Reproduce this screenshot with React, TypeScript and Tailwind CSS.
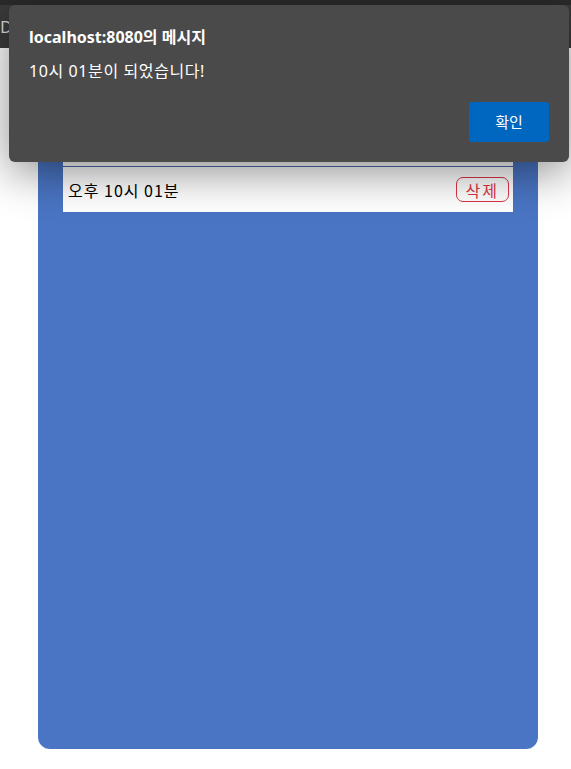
import React from "react";

export default function App() {
  return (
    <div className="relative w-[571px] h-[769px] overflow-hidden bg-white" style={{ fontFamily: '"Noto Sans", "Noto Sans CJK KR", sans-serif' }}>
      {/* browser bar */}
      <div className="h-[48px] bg-[#3b3b3b] border-t-[5px] border-[#2b2b2b] flex items-center">
        <span className="text-[#dcdcdc] text-[17px] ml-0 leading-none">D</span>
      </div>
      {/* page */}
      <div className="pl-[38px]">
        <div className="w-[500px] h-[701px] bg-[#4a75c4] rounded-b-[12px] pt-[71px] px-[25px]">
          <div className="h-[48px] bg-white border-b border-[#4a6aa8]" />
          <div className="h-[45px] bg-white flex items-center justify-between pl-[5px] pr-[4px]">
            <span className="text-[16px] text-black tracking-[1px]" style={{ fontFamily: '"Noto Sans CJK KR", sans-serif' }}>오후 10시 01분</span>
            <button className="h-[25px] px-[9px] border border-[#dc3545] rounded-[7px] text-[#dc3545] text-[16px] leading-none tracking-[2px]" style={{ fontFamily: '"Noto Sans CJK KR", sans-serif' }}>삭제</button>
          </div>
        </div>
      </div>
      {/* alert dialog */}
      <div className="absolute left-[9px] top-[5px] w-[560px] h-[157px] bg-[#4a4a4a] rounded-[6px] shadow-[0_10px_45px_rgba(0,0,0,0.45)] pl-[20px] pr-[20px] pt-[20px]">
        <div className="text-white text-[16px] font-bold leading-[24px]">localhost:8080의 메시지</div>
        <div className="text-white text-[16px] leading-[22px] mt-[11px] tracking-[0.6px]">10시 01분이 되었습니다!</div>
        <div className="flex justify-end mt-[20px]">
          <button className="w-[80px] h-[40px] bg-[#0067c0] rounded-[3px] text-white text-[15px]">확인</button>
        </div>
      </div>
    </div>
  );
}
